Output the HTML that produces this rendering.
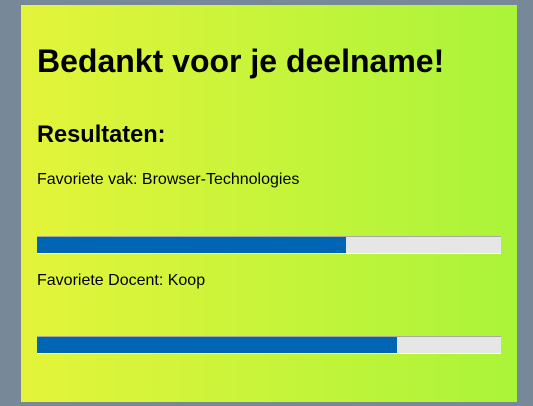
<!DOCTYPE html>
<html><head><style>
html,body{margin:0;padding:0;width:533px;height:406px;background:#778899;overflow:hidden;font-family:"Liberation Sans",Arial,sans-serif;}
.p{position:absolute;left:21px;top:5px;width:496px;height:397px;background:linear-gradient(to right,#e4f43a,#aaf43a);}
.t{position:absolute;white-space:nowrap;color:#000;}
.bar{position:absolute;left:37px;width:464px;height:18px;background:#e6e6e6;border-top:1px solid #a8a8a8;border-bottom:1px solid #fff;box-sizing:border-box;}
.bar div{height:100%;background:#0066b4;}
</style></head><body>
<div class="p"></div>
<div class="t" style="left:37px;top:43px;font-size:32px;font-weight:bold;">Bedankt voor je deelname!</div>
<div class="t" style="left:37px;top:122px;font-size:23.6px;font-weight:bold;">Resultaten:</div>
<div class="t" style="left:37px;top:171px;font-size:16px;">Favoriete vak: Browser-Technologies</div>
<div class="bar" style="top:236px;"><div style="width:309px"></div></div>
<div class="t" style="left:37px;top:272px;font-size:16px;">Favoriete Docent: Koop</div>
<div class="bar" style="top:336px;"><div style="width:360px"></div></div>
</body></html>
